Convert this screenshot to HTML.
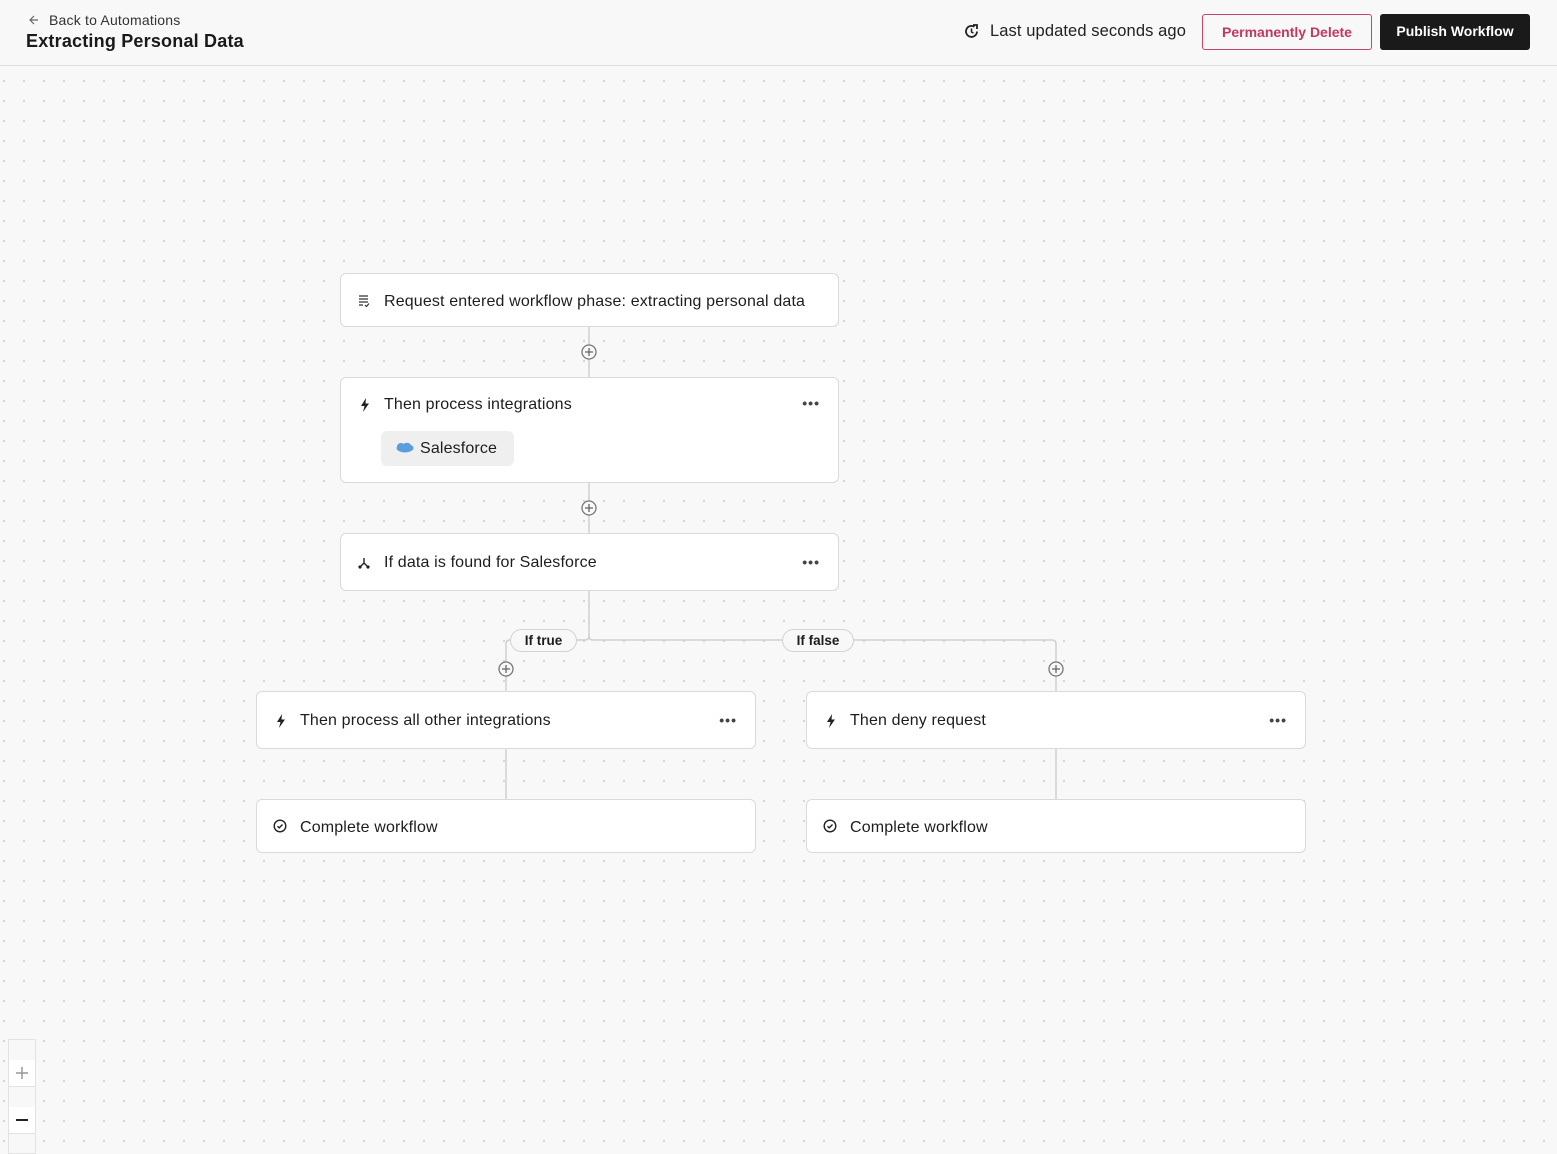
<!DOCTYPE html>
<html><head><meta charset="utf-8"><style>
*{box-sizing:border-box;margin:0;padding:0}
body{width:1557px;height:1148px;overflow:hidden;font-family:"Liberation Sans",sans-serif;color:#1d1d1d;background:#f7f8f7;position:relative}
.canvas{position:absolute;left:0;top:66px;width:1557px;height:1082px;background-color:#f7f8f7;background-image:radial-gradient(circle,#d3d5d3 1px,transparent 1.3px);background-size:20px 20px;background-position:-6px -75px}
.hdr{position:absolute;left:0;top:0;width:1557px;height:66px;background:#f7f8f7;border-bottom:1px solid #dcdcdc}
.card{position:absolute;background:#fff;border:1px solid #dadada;border-radius:6px;font-size:16px;letter-spacing:0.15px}
.card .t{position:absolute;left:43px;top:1px;line-height:53px}
.card .ic{position:absolute;left:16px;top:19px}
.dots{position:absolute;right:18px;top:20px;font-size:14px;letter-spacing:1px;color:#444;font-weight:bold;line-height:10px}
.pill{position:absolute;background:#f7f8f7;border:1px solid #d3d3d3;border-radius:12px;font-size:13.5px;font-weight:bold;text-align:center;height:23px;line-height:22px}
</style></head><body>
<div class="canvas"></div>
<div class="hdr">
 <div style="position:absolute;left:28px;top:12px;font-size:14px;color:#333;letter-spacing:0.2px">
  <svg width="12" height="12" viewBox="0 0 12 12" style="vertical-align:-1px;margin-right:9px"><path d="M10 6H2M6 2L2 6l4 4" stroke="#666" stroke-width="1.2" fill="none"/></svg>Back to Automations</div>
 <div style="position:absolute;left:26px;top:31px;font-size:18px;font-weight:bold;color:#1a1a1a;letter-spacing:0.2px">Extracting Personal Data</div>
 <svg style="position:absolute;left:963px;top:23px" width="17" height="17" viewBox="0 0 17 17"><path d="M14 8.5A5.5 5.5 0 1 1 11.5 3.8" stroke="#222" stroke-width="1.8" fill="none"/><path d="M10 2h4v4" stroke="#222" stroke-width="1.8" fill="none"/><path d="M8.5 5.5v3.5l2 1" stroke="#222" stroke-width="1.5" fill="none"/></svg>
 <div style="position:absolute;left:990px;top:22px;font-size:16.5px;color:#222;letter-spacing:0.1px">Last updated seconds ago</div>
 <div style="position:absolute;left:1202px;top:14px;width:170px;height:36px;border:1px solid #c4476b;border-radius:3px;color:#c0395f;font-size:14px;font-weight:bold;text-align:center;line-height:34px">Permanently Delete</div>
 <div style="position:absolute;left:1380px;top:14px;width:150px;height:36px;background:#1a1a1a;border-radius:3px;color:#fff;font-size:14px;font-weight:bold;text-align:center;line-height:34px">Publish Workflow</div>
</div>

<svg style="position:absolute;left:0;top:0" width="1557" height="1148">
 <g stroke="#cfcfcf" stroke-width="1.5" fill="none">
  <path d="M589 326V377M589 482V533M589 590V636q0 4 4 4H1052q4 0 4 4V691M589 636q0 4-4 4H510q-4 0-4 4V691M506 748V799M1056 748V799"/>
 </g>
 <g fill="#f7f8f7" stroke="#777" stroke-width="1.3">
  <circle cx="589" cy="352" r="7"/><circle cx="589" cy="508" r="7"/><circle cx="506" cy="669" r="7"/><circle cx="1056" cy="669" r="7"/>
 </g>
 <g stroke="#666" stroke-width="1.3">
  <path d="M585 352h8M589 348v8M585 508h8M589 504v8M502 669h8M506 665v8M1052 669h8M1056 665v8"/>
 </g>
</svg>

<div class="card" style="left:340px;top:273px;width:499px;height:54px">
 <svg class="ic" width="13" height="14" viewBox="0 0 13 14" style="top:20px"><path d="M2 2h9M2 5h9M2 8h9M2 11h4" stroke="#333" stroke-width="1.3"/><path d="M8 11l1.5 1.5L12 9.5" stroke="#333" stroke-width="1.2" fill="none"/></svg>
 <div class="t">Request entered workflow phase: extracting personal data</div>
</div>

<div class="card" style="left:340px;top:377px;width:499px;height:106px">
 <svg class="ic" width="10" height="14" viewBox="0 0 10 14" style="left:19px;top:20px"><path d="M6 0L1 8h3.5L3 14l6-8.5H5.5z" fill="#222"/></svg>
 <div class="t" style="line-height:52px">Then process integrations</div>
 <div class="dots">•••</div>
 <div style="position:absolute;left:40px;top:53px;width:133px;height:35px;background:#efefef;border-radius:6px;font-size:16px;line-height:35px;padding-left:39px">
  <svg style="position:absolute;left:15px;top:11px" width="18" height="12" viewBox="0 0 18 12"><ellipse cx="9" cy="6" rx="8.5" ry="4.5" fill="#5a9ee0"/><ellipse cx="5" cy="4.5" rx="4" ry="3.5" fill="#5a9ee0"/><ellipse cx="11" cy="4" rx="4" ry="3.3" fill="#5a9ee0"/></svg>Salesforce</div>
</div>

<div class="card" style="left:340px;top:533px;width:499px;height:58px">
 <svg class="ic" width="14" height="14" viewBox="0 0 14 14" style="top:22px"><path d="M7 2v5L3 11M7 7l4 4" stroke="#222" stroke-width="1.4" fill="none"/><circle cx="3" cy="11" r="1.6" fill="#222"/><circle cx="11" cy="11" r="1.6" fill="#222"/></svg>
 <div class="t" style="line-height:56px">If data is found for Salesforce</div>
 <div class="dots" style="top:23px">•••</div>
</div>

<div class="pill" style="left:510px;top:629px;width:67px">If true</div>
<div class="pill" style="left:782px;top:629px;width:72px">If false</div>

<div class="card" style="left:256px;top:691px;width:500px;height:58px">
 <svg class="ic" width="10" height="14" viewBox="0 0 10 14" style="left:19px;top:22px"><path d="M6 0L1 8h3.5L3 14l6-8.5H5.5z" fill="#222"/></svg>
 <div class="t" style="line-height:56px">Then process all other integrations</div>
 <div class="dots" style="top:23px">•••</div>
</div>
<div class="card" style="left:806px;top:691px;width:500px;height:58px">
 <svg class="ic" width="10" height="14" viewBox="0 0 10 14" style="left:19px;top:22px"><path d="M6 0L1 8h3.5L3 14l6-8.5H5.5z" fill="#222"/></svg>
 <div class="t" style="line-height:56px">Then deny request</div>
 <div class="dots" style="top:23px">•••</div>
</div>
<div class="card" style="left:256px;top:799px;width:500px;height:54px">
 <svg class="ic" width="14" height="14" viewBox="0 0 14 14" style="top:19px"><circle cx="7" cy="7" r="5.8" stroke="#222" stroke-width="1.4" fill="none"/><path d="M4.5 7.2l1.7 1.7 3.3-3.4" stroke="#222" stroke-width="1.4" fill="none"/></svg>
 <div class="t">Complete workflow</div>
</div>
<div class="card" style="left:806px;top:799px;width:500px;height:54px">
 <svg class="ic" width="14" height="14" viewBox="0 0 14 14" style="top:19px"><circle cx="7" cy="7" r="5.8" stroke="#222" stroke-width="1.4" fill="none"/><path d="M4.5 7.2l1.7 1.7 3.3-3.4" stroke="#222" stroke-width="1.4" fill="none"/></svg>
 <div class="t">Complete workflow</div>
</div>

<div style="position:absolute;left:8px;top:1039px;width:28px;height:115px;border:1px solid #e2e2e2;background:#f7f8f7">
 <div style="position:absolute;left:0;top:20px;width:26px;height:26px;background:#fff"><svg width="26" height="26"><path d="M7 13h12M13 7v12" stroke="#999" stroke-width="1.5"/></svg></div>
 <div style="position:absolute;left:0;top:46px;width:26px;height:1px;background:#e2e2e2"></div>
 <div style="position:absolute;left:0;top:67px;width:26px;height:26px;background:#fff"><svg width="26" height="26"><path d="M7 13h12" stroke="#222" stroke-width="2"/></svg></div>
 <div style="position:absolute;left:0;top:93px;width:26px;height:1px;background:#e2e2e2"></div>
</div>
</body></html>
